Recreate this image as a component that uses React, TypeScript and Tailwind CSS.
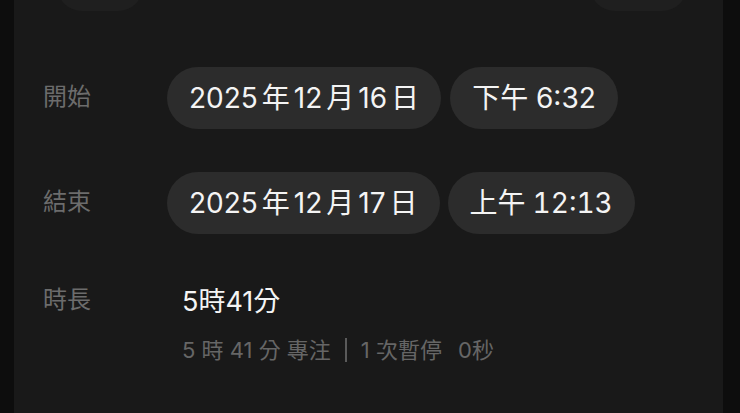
import React from "react";

const font = { fontFamily: "Inter, 'Noto Sans CJK TC', sans-serif" };

function Pill({ children }: { children: React.ReactNode }) {
  return (
    <div className="h-[62px] rounded-full bg-[#2c2c2c] px-[22px] flex items-center text-[28px] text-[#f4f4f4] whitespace-nowrap">
      {children}
    </div>
  );
}

function DateText({ y, m, d }: { y: string; m: string; d: string }) {
  return (
    <span className="flex items-center">
      <span>{y}</span>
      <span className="mx-[4px]">年</span>
      <span>{m}</span>
      <span className="mx-[4px]">月</span>
      <span>{d}</span>
      <span className="ml-[4px]">日</span>
    </span>
  );
}

export default function App() {
  return (
    <div className="w-[740px] h-[413px] bg-[#0d0d0d] flex pl-[14px] pr-[17px] overflow-hidden" style={font}>
      <div className="flex-1 bg-[#191919] flex flex-col overflow-hidden">
        <div className="flex justify-between -mt-[39px] pl-[43px] pr-[36px]">
          <div className="w-[86px] h-[50px] rounded-full bg-[#1f1f1f]" />
          <div className="w-[97px] h-[50px] rounded-full bg-[#1f1f1f]" />
        </div>
        <div className="grid grid-cols-[124px_1fr] pl-[29px] mt-[56px] items-center">
          <div className="text-[24px] text-[#6c6c6c] leading-none -mt-[2px]">開始</div>
          <div className="flex gap-[9px]">
            <Pill>
              <DateText y="2025" m="12" d="16" />
            </Pill>
            <Pill>下午 6:32</Pill>
          </div>
        </div>
        <div className="grid grid-cols-[124px_1fr] pl-[29px] mt-[43px] items-center">
          <div className="text-[24px] text-[#6c6c6c] leading-none -mt-[2px]">結束</div>
          <div className="flex gap-[8px]">
            <Pill>
              <DateText y="2025" m="12" d="17" />
            </Pill>
            <Pill>
              <span>上午</span>
              <span className="ml-[7px] tabular-nums">12:13</span>
            </Pill>
          </div>
        </div>
        <div className="grid grid-cols-[124px_1fr] pl-[29px] mt-[52px]">
          <div className="text-[24px] text-[#6c6c6c] leading-none pt-[2px]">時長</div>
          <div className="flex flex-col pl-[15px]">
            <div className="text-[27px] text-[#f4f4f4] leading-none pt-[2px]">5時41分</div>
            <div className="flex items-center text-[22px] text-[#666666] leading-none mt-[23px] whitespace-nowrap">
              <span>5 時 41 分 專注</span>
              <span className="w-[2px] h-[24px] bg-[#5a5a5a] mx-[14px]" />
              <span>1 次暫停</span>
              <span className="ml-[16px]">0秒</span>
            </div>
          </div>
        </div>
      </div>
    </div>
  );
}
